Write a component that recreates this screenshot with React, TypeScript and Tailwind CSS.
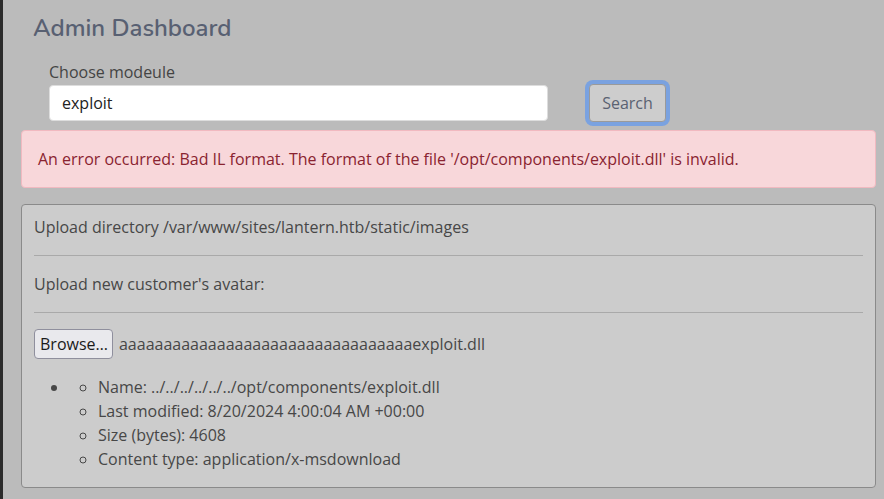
import React from "react";

export default function App() {
  const font = { fontFamily: '"Open Sans", "Noto Sans", sans-serif' };
  return (
    <div className="flex min-h-[499px] w-[884px] bg-[#bbbbbb]" style={font}>
      <div className="w-[3px] shrink-0 bg-[#2b2b2b]" />
      <div className="flex-1 pl-[18px] pr-[8px]">
        <h1
          className="pl-[12px] pt-[14px] text-[24px] leading-[28px] font-semibold text-[#586072]"
          style={{ fontFamily: 'Nunito, Lato, "Open Sans", sans-serif' }}
        >
          Admin Dashboard
        </h1>
        <div className="mt-[18px] flex items-end pl-[28px]">
          <div className="flex w-[499px] flex-col">
            <label className="text-[16px] leading-[24px] text-[#444444]">Choose modeule</label>
            <div className="mt-[1px] flex h-[36px] items-center rounded-[4px] border border-[#dddddd] bg-white px-[12px] text-[16px] text-[#222222]">
              exploit
            </div>
          </div>
          <button className="mb-[-1px] ml-[41px] h-[38px] w-[77px] rounded-[4px] border border-[#9a9a9a] bg-[#cdcdcd] text-[16px] text-[#5a6272] ring-4 ring-[#7aa2e0]">
            Search
          </button>
        </div>
        <div className="mt-[9px] rounded-[4px] border border-[#f1b9c0] bg-[#f8d7da] px-[16px] py-[16px] text-[16px] leading-[24px] text-[#8a2330]">
          An error occurred: Bad IL format. The format of the file '/opt/components/exploit.dll' is invalid.
        </div>
        <div className="mt-[16px] rounded-[4px] border border-[#8a8a8a] bg-[#cccccc] px-[12px] pt-[10px] pb-[16px] text-[16px] leading-[24px] text-[#474747]">
          <div>Upload directory /var/www/sites/lantern.htb/static/images</div>
          <hr className="my-[16px] border-t border-[#a9a9a9]" />
          <div>Upload new customer's avatar:</div>
          <hr className="my-[16px] border-t border-[#a9a9a9]" />
          <div className="flex items-center">
            <span className="flex h-[30px] items-center rounded-[4px] border border-[#8f8f9d] bg-[#e9e9ed] pl-[5px] pr-[4px] pb-[1px] text-[#1a1a1a]">
              Browse…
            </span>
            <span className="ml-[6px]">aaaaaaaaaaaaaaaaaaaaaaaaaaaaaaaaaexploit.dll</span>
          </div>
          <ul className="mt-[16px] list-disc pl-[35px]">
            <li>
              <ul className="list-[circle] pl-[29px]">
                <li>Name: ../../../../../../opt/components/exploit.dll</li>
                <li>Last modified: 8/20/2024 4:00:04 AM +00:00</li>
                <li>Size (bytes): 4608</li>
                <li>Content type: application/x-msdownload</li>
              </ul>
            </li>
          </ul>
        </div>
      </div>
    </div>
  );
}
